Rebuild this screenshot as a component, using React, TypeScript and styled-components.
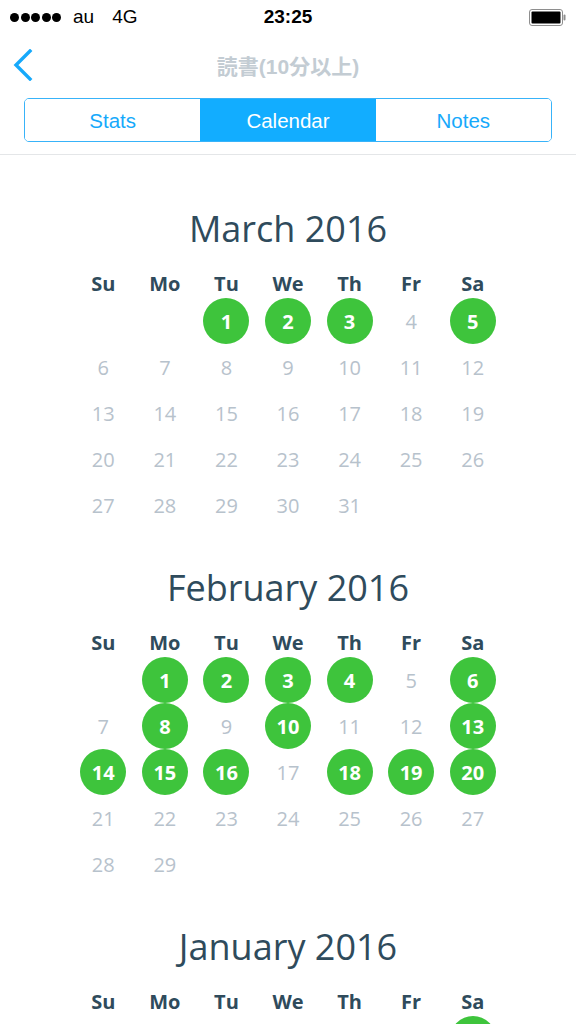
import React from "react";
import styled, { createGlobalStyle } from "styled-components";

const Global = createGlobalStyle`
  html, body { margin: 0; padding: 0; background: #fff; }
  body { width: 576px; height: 1024px; overflow: hidden; }
  * { box-sizing: border-box; }
`;

const Screen = styled.div`
  width: 576px;
  height: 1024px;
  overflow: hidden;
  background: #fff;
  display: flex;
  flex-direction: column;
  & > * { flex-shrink: 0; }
`;

const StatusBar = styled.div`
  height: 40px;
  display: grid;
  grid-template-columns: 1fr auto 1fr;
  align-items: center;
  padding: 0 10px 6px 10px;
  font-family: "Liberation Sans", Arial, sans-serif;
  font-size: 19px;
  color: #000;
`;

const StatusLeft = styled.div`
  display: flex;
  align-items: center;
`;

const Dots = styled.div`
  display: flex;
  gap: 1.5px;
  margin-right: 12px;
`;

const Dot = styled.span`
  width: 9px;
  height: 9px;
  border-radius: 50%;
  background: #000;
`;

const Carrier = styled.span`
  margin-right: 18px;
`;

const Time = styled.div`
  font-weight: 700;
  font-size: 19px;
`;

const StatusRight = styled.div`
  display: flex;
  justify-content: flex-end;
  align-items: center;
`;

const NavBar = styled.div`
  height: 52px;
  display: grid;
  grid-template-columns: 60px 1fr 60px;
  align-items: center;
  padding-bottom: 2px;
`;

const BackButton = styled.div`
  display: flex;
  align-items: center;
  padding-left: 12px;
`;

const Title = styled.div`
  text-align: center;
  font-family: "Liberation Sans", "Noto Sans CJK JP", sans-serif;
  font-weight: 700;
  font-size: 21px;
  color: #c3ccd3;
`;

const Segmented = styled.div`
  margin: 6px 24px 0;
  height: 44px;
  display: grid;
  grid-template-columns: repeat(3, 1fr);
  border: 1.5px solid #38b3f9;
  border-radius: 5px;
  overflow: hidden;
`;

const Segment = styled.div<{ $active?: boolean }>`
  display: flex;
  align-items: center;
  justify-content: center;
  padding-top: 1px;
  font-family: "Liberation Sans", Arial, sans-serif;
  font-size: 20.5px;
  color: ${(p) => (p.$active ? "#fff" : "#16a9fb")};
  background: ${(p) => (p.$active ? "#12adff" : "#fff")};
`;

const Divider = styled.div`
  margin-top: 12px;
  height: 1px;
  background: #e4e6e8;
`;

const Content = styled.div`
  padding-top: 52px;
  display: flex;
  flex-direction: column;
  gap: 38px;
`;

const Month = styled.section`
  display: flex;
  flex-direction: column;
  align-items: center;
`;

const MonthTitle = styled.h2`
  margin: 0 0 17px;
  font-family: "Open Sans", sans-serif;
  font-weight: 400;
  font-size: 36px;
  line-height: 44px;
  color: #2f4b5c;
`;

const Grid = styled.div`
  width: 431px;
  display: grid;
  grid-template-columns: repeat(7, 1fr);
`;

const WeekDay = styled.div`
  height: 30px;
  display: flex;
  align-items: center;
  justify-content: center;
  font-family: "Open Sans", sans-serif;
  font-weight: 700;
  font-size: 20px;
  color: #2f4b5c;
`;

const Cell = styled.div`
  height: 46px;
  display: flex;
  align-items: center;
  justify-content: center;
`;

const Day = styled.div<{ $done?: boolean }>`
  width: 46px;
  height: 46px;
  border-radius: 50%;
  display: flex;
  align-items: center;
  justify-content: center;
  font-family: "Open Sans", sans-serif;
  font-size: 20px;
  font-weight: ${(p) => (p.$done ? 700 : 400)};
  color: ${(p) => (p.$done ? "#fff" : "#b7c2cc")};
  background: ${(p) => (p.$done ? "#3ec43c" : "transparent")};
`;

const WEEK = ["Su", "Mo", "Tu", "We", "Th", "Fr", "Sa"];

type MonthData = { name: string; start: number; days: number; done: number[] };

const MONTHS: MonthData[] = [
  { name: "March 2016", start: 2, days: 31, done: [1, 2, 3, 5] },
  {
    name: "February 2016",
    start: 1,
    days: 29,
    done: [1, 2, 3, 4, 6, 8, 10, 13, 14, 15, 16, 18, 19, 20],
  },
  { name: "January 2016", start: 5, days: 31, done: [2, 4, 5, 6, 9, 11, 12] },
];

function MonthView({ m }: { m: MonthData }) {
  const cells: (number | null)[] = [];
  for (let i = 0; i < m.start; i++) cells.push(null);
  for (let d = 1; d <= m.days; d++) cells.push(d);
  return (
    <Month>
      <MonthTitle>{m.name}</MonthTitle>
      <Grid>
        {WEEK.map((w) => (
          <WeekDay key={w}>{w}</WeekDay>
        ))}
        {cells.map((d, i) => (
          <Cell key={i}>
            {d !== null && <Day $done={m.done.includes(d)}>{d}</Day>}
          </Cell>
        ))}
      </Grid>
    </Month>
  );
}

export default function App() {
  return (
    <Screen>
      <Global />
      <StatusBar>
        <StatusLeft>
          <Dots>
            {[0, 1, 2, 3, 4].map((i) => (
              <Dot key={i} />
            ))}
          </Dots>
          <Carrier>au</Carrier>
          <span>4G</span>
        </StatusLeft>
        <Time>23:25</Time>
        <StatusRight>
          <svg width="37" height="17" viewBox="0 0 37 17">
            <rect x="0.5" y="0.5" width="33" height="16" rx="2.5" fill="none" stroke="#8e8e8e" />
            <rect x="2.5" y="2.5" width="29" height="12" rx="1" fill="#000" />
            <rect x="34.5" y="5.5" width="2" height="6" rx="1" fill="#8e8e8e" />
          </svg>
        </StatusRight>
      </StatusBar>
      <NavBar>
        <BackButton>
          <svg width="22" height="32" viewBox="0 0 22 32">
            <path d="M18 2 L4 16 L18 30" fill="none" stroke="#16a9fb" strokeWidth="3.4" strokeLinecap="square" />
          </svg>
        </BackButton>
        <Title>読書(10分以上)</Title>
        <div />
      </NavBar>
      <Segmented>
        <Segment>Stats</Segment>
        <Segment $active>Calendar</Segment>
        <Segment>Notes</Segment>
      </Segmented>
      <Divider />
      <Content>
        {MONTHS.map((m) => (
          <MonthView key={m.name} m={m} />
        ))}
      </Content>
    </Screen>
  );
}
